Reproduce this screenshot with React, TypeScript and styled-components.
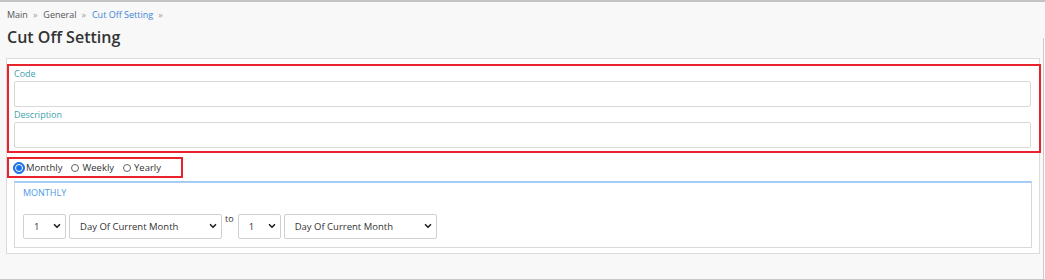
import React from "react";
import styled, { createGlobalStyle } from "styled-components";
import { ChevronDown } from "lucide-react";

const GlobalStyle = createGlobalStyle`
  html, body {
    margin: 0;
    padding: 0;
    background: #f8f8f8;
  }
  body {
    font-family: "Open Sans", "Noto Sans", Arial, sans-serif;
    color: #333;
  }
`;

const crumbs = ["Main", "General", "Cut Off Setting"];

const dayOptions = ["Day Of Current Month", "Day Of Previous Month", "Day Of Next Month"];

const periods = ["Monthly", "Weekly", "Yearly"];

export default function App() {
  return (
    <>
      <GlobalStyle />
      <Page>
        <MainColumn>
          <Crumbs>
            {crumbs.map((c, i) => (
              <React.Fragment key={c}>
                <Crumb $active={i === crumbs.length - 1}>{c}</Crumb>
                <Sep>»</Sep>
              </React.Fragment>
            ))}
          </Crumbs>
          <Title>Cut Off Setting</Title>

          <Panel>
            <HighlightBox>
              <FieldLabel>Code</FieldLabel>
              <TextInput type="text" />
              <FieldLabel $spaced>Description</FieldLabel>
              <TextInput type="text" />
            </HighlightBox>

            <RadioBox>
              {periods.map((p, i) => (
                <RadioOption key={p}>
                  <RadioDot $checked={i === 0} />
                  <RadioText $checked={i === 0}>{p}</RadioText>
                </RadioOption>
              ))}
            </RadioBox>

            <Group>
              <GroupTitle>MONTHLY</GroupTitle>
              <SelectRow>
                <SelectWrap $w={43}>
                  <NativeSelect defaultValue="1">
                    <option value="1">1</option>
                    <option value="2">2</option>
                  </NativeSelect>
                  <Chevron size={10} strokeWidth={4} />
                </SelectWrap>
                <SelectWrap $w={153}>
                  <NativeSelect defaultValue={dayOptions[0]}>
                    {dayOptions.map((d) => (
                      <option key={d}>{d}</option>
                    ))}
                  </NativeSelect>
                  <Chevron size={10} strokeWidth={4} />
                </SelectWrap>
                <ToText>to</ToText>
                <SelectWrap $w={43}>
                  <NativeSelect defaultValue="1">
                    <option value="1">1</option>
                    <option value="2">2</option>
                  </NativeSelect>
                  <Chevron size={10} strokeWidth={4} />
                </SelectWrap>
                <SelectWrap $w={153}>
                  <NativeSelect defaultValue={dayOptions[0]}>
                    {dayOptions.map((d) => (
                      <option key={d}>{d}</option>
                    ))}
                  </NativeSelect>
                  <Chevron size={10} strokeWidth={4} />
                </SelectWrap>
              </SelectRow>
            </Group>
          </Panel>
          <Footer />
        </MainColumn>
        <ScrollRail />
      </Page>
    </>
  );
}

const Page = styled.div`
  display: flex;
  height: 280px;
  box-sizing: border-box;
  border-top: 2px solid #c4c4c4;
  border-bottom: 1px solid #c8c8c8;
  background: #f8f8f8;
`;

const MainColumn = styled.div`
  flex: 1;
  display: flex;
  flex-direction: column;
`;

const ScrollRail = styled.div`
  width: 1px;
  margin-top: 36px;
  border-left: 1px solid #cbcbcb;
  background: #fdfdfd;
`;

const Crumbs = styled.div`
  display: flex;
  align-items: center;
  padding: 6px 0 0 7px;
  height: 14px;
  line-height: 14px;
  font-size: 9px;
`;

const Crumb = styled.span<{ $active?: boolean }>`
  color: ${(p) => (p.$active ? "#3d85d8" : "#555")};
`;

const Sep = styled.span`
  color: #a0a0a0;
  margin: 0 6px 0 5px;
`;

const Title = styled.h1`
  margin: 4px 0 0 7px;
  font-size: 16px;
  line-height: 22px;
  font-weight: 600;
  color: #333;
`;

const Panel = styled.div`
  margin: 10px 3px 0 6px;
  padding: 5px 0 5px 0;
  background: #fff;
  border: 1px solid #dcdcdc;
`;

const HighlightBox = styled.div`
  margin-right: -2px;
  padding: 2px 8px 3px 5px;
  border: 2px solid #e8232c;
`;

const FieldLabel = styled.div<{ $spaced?: boolean }>`
  font-size: 9px;
  line-height: 12px;
  color: #3ea3ab;
  margin: ${(p) => (p.$spaced ? "2px" : "0")} 0 1px 0;
`;

const TextInput = styled.input`
  display: block;
  width: 100%;
  height: 26px;
  box-sizing: border-box;
  border: 1px solid #d8d8d8;
  border-radius: 2px;
  background: #fff;
  outline: none;
`;

const RadioBox = styled.div`
  display: flex;
  align-items: center;
  width: 176px;
  height: 21px;
  box-sizing: border-box;
  margin-top: 4px;
  padding-left: 4px;
  border: 2px solid #e8232c;
`;

const RadioOption = styled.label`
  display: flex;
  align-items: center;
  margin-right: 9px;
  font-size: 9.5px;
  line-height: 14px;
  color: #333;
`;

const RadioDot = styled.span<{ $checked?: boolean }>`
  position: relative;
  box-sizing: border-box;
  width: ${(p) => (p.$checked ? 12 : 8)}px;
  height: ${(p) => (p.$checked ? 12 : 8)}px;
  border-radius: 50%;
  border: 1px solid ${(p) => (p.$checked ? "#1a73e8" : "#666")};
  background: ${(p) => (p.$checked ? "#1a73e8" : "#fff")};

  &::after {
    content: "";
    display: ${(p) => (p.$checked ? "block" : "none")};
    position: absolute;
    left: 1px;
    top: 1px;
    width: 8px;
    height: 8px;
    box-sizing: border-box;
    border-radius: 50%;
    border: 1.5px solid #fff;
    background: #1a73e8;
  }
`;

const RadioText = styled.span<{ $checked?: boolean }>`
  margin-left: ${(p) => (p.$checked ? 1 : 3)}px;
`;

const Group = styled.div`
  margin: 3px 7px 0 7px;
  padding: 4px 8px 9px 8px;
  border: 1px solid #d9d9d9;
  border-top: 2px solid #a6cdf3;
`;

const GroupTitle = styled.div`
  font-size: 9px;
  line-height: 12px;
  color: #4a9be6;
  margin-bottom: 14px;
`;

const SelectRow = styled.div`
  display: flex;
  align-items: flex-start;
  gap: 3px;
`;

const SelectWrap = styled.div<{ $w: number }>`
  position: relative;
  width: ${(p) => p.$w}px;
  height: 25px;
`;

const NativeSelect = styled.select`
  appearance: none;
  -webkit-appearance: none;
  width: 100%;
  height: 100%;
  box-sizing: border-box;
  padding: 0 16px 0 10px;
  border: 1px solid #d0d0d0;
  border-radius: 2px;
  background: #fff;
  font-family: "Open Sans", "Noto Sans", Arial, sans-serif;
  font-size: 9.5px;
  color: #333;
  outline: none;
`;

const Chevron = styled(ChevronDown)`
  position: absolute;
  right: 4px;
  top: 8px;
  color: #222;
  pointer-events: none;
`;

const ToText = styled.span`
  font-size: 9px;
  line-height: 12px;
  color: #333;
  margin: 0 1px 0 0;
`;

const Footer = styled.div`
  flex: 1;
  background: #f8f8f8;
`;
